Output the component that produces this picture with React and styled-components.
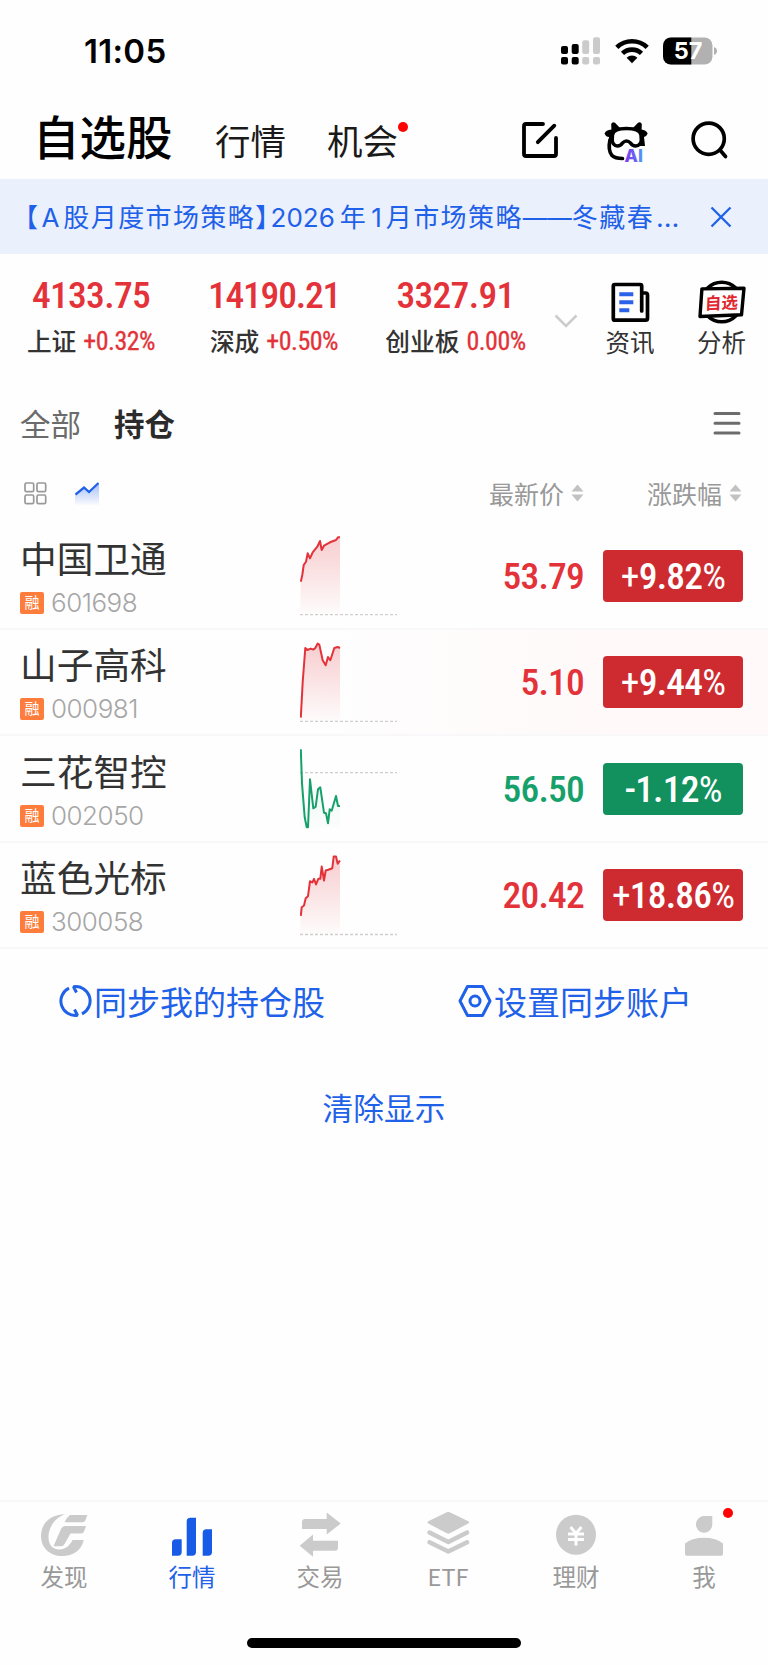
import React from 'react';
import styled, { createGlobalStyle, ThemeProvider } from 'styled-components';

const theme = {
  colors: {
    page: '#fefefe',
    text: '#333333',
    muted: '#999999',
    light: '#a6a6a6',
    blue: '#1f61e8',
    up: '#e33239',
    down: '#16a06b',
    upFill: '#ce2b30',
    downFill: '#12915f',
    line: '#f8f8fa',
    icon: '#cbcbcb',
  },
  fonts: {
    cjk: "'Noto Sans CJK SC', sans-serif",
    latin: "Inter, 'Noto Sans CJK SC', sans-serif",
    number: "'Roboto Condensed', Roboto, 'Noto Sans CJK SC', sans-serif",
  },
};

const GlobalStyle = createGlobalStyle`
  * {
    box-sizing: border-box;
  }

  body {
    margin: 0;
    background: #fefefe;
  }
`;

const Page = styled.div`
  display: flex;
  flex-direction: column;
  width: 768px;
  height: 1665px;
  overflow: hidden;
  background: ${props => props.theme.colors.page};
  color: ${props => props.theme.colors.text};
  font-family: ${props => props.theme.fonts.cjk};
  white-space: nowrap;

  svg {
    display: block;
    flex: none;
  }
`;

const StatusBar = styled.div`
  display: flex;
  align-items: center;
  justify-content: space-between;
  height: 102px;
  padding: 0 51px 0 84px;
  color: #000;
`;

const Clock = styled.div`
  font-family: ${props => props.theme.fonts.latin};
  font-size: 33px;
  font-weight: 600;
  letter-spacing: 0.3px;
`;

const StatusIcons = styled.div`
  display: flex;
  align-items: center;
  gap: 14px;
`;

const NavBar = styled.div`
  display: flex;
  align-items: center;
  height: 77px;
  padding: 0 38px 0 33px;
  color: #000;
`;

const NavTitle = styled.div`
  width: 182px;
  margin-top: -12px;
  font-size: 46.5px;
  font-weight: 500;
  line-height: 60px;
`;

const NavLink = styled.div`
  position: relative;
  width: 112px;
  margin-top: -2px;
  font-size: 35.5px;
  line-height: 60px;
  color: #1a1a1a;
`;

const RedDot = styled.i`
  position: absolute;
  top: ${props => props.$top}px;
  left: ${props => props.$left}px;
  width: 10px;
  height: 10px;
  border-radius: 50%;
  background: #fd0303;
`;

const NavActions = styled.div`
  display: flex;
  align-items: flex-start;
  gap: 40px;
  margin: 6px 0 0 auto;
`;

const Banner = styled.div`
  display: flex;
  align-items: center;
  justify-content: space-between;
  height: 75px;
  padding: 0 36px 0 12px;
  background: #eaf0fc;
  color: ${props => props.theme.colors.blue};
`;

const BannerText = styled.div`
  font-size: 26px;
  letter-spacing: 1.4px;
  line-height: 40px;
`;

const Latin = styled.span`
  margin: 0 ${props => props.$after || 0}px 0 ${props => props.$before || 0}px;
  font-family: ${props => props.theme.fonts.latin};
  letter-spacing: 0;
`;

const Dash = styled(Latin)`
  font-size: 24.5px;
`;

const Ellipsis = styled(Latin)`
  font-size: 27px;
`;

// Half-width form of the closing bracket
const Bracket = styled.span`
  font-feature-settings: 'halt';
`;

const IndexBar = styled.div`
  display: flex;
  height: 116px;
  padding-top: 22px;
`;

const IndexItem = styled.div`
  flex: none;
  width: ${props => props.$width}px;
  text-align: center;
`;

const IndexValue = styled.div`
  font-family: ${props => props.theme.fonts.number};
  font-stretch: 75%;
  font-size: 37.5px;
  font-weight: 500;
  line-height: 39px;
  letter-spacing: ${props => props.$tracking}px;
  color: ${props => props.theme.colors.up};
`;

const IndexLabel = styled.div`
  display: flex;
  align-items: center;
  justify-content: center;
  gap: 7px;
  margin-top: 7px;
  font-size: 24.7px;
  font-weight: 500;
  line-height: 35px;

  em {
    margin-top: 2px;
    font-family: ${props => props.theme.fonts.number};
    font-stretch: 75%;
    font-size: 26px;
    font-style: normal;
    font-weight: 400;
    letter-spacing: -0.5px;
    color: ${props => props.theme.colors.up};
    -webkit-text-stroke: 0.3px;
  }
`;

const Expand = styled.div`
  flex: none;
  width: 43px;
  padding: 37px 0 0 9px;
`;

const Shortcut = styled.div`
  display: flex;
  flex: none;
  flex-direction: column;
  align-items: center;
  width: ${props => props.$width}px;
  padding-top: 4px;
  font-size: 24.5px;
  line-height: 36px;
`;

const GroupTabs = styled.div`
  display: flex;
  align-items: center;
  height: 104px;
  padding: 2px 27px 0 20px;
  font-size: 30.5px;

  svg {
    margin-left: auto;
  }
`;

const GroupTab = styled.div`
  width: 94px;
  font-weight: ${props => (props.$active ? 700 : 400)};
  color: ${props => (props.$active ? '#2b2b2b' : '#6b6b6b')};
`;

const ListHeader = styled.div`
  display: flex;
  align-items: center;
  height: 49px;
  padding: 0 26px 11px 24px;
  color: ${props => props.theme.colors.muted};
  font-size: 25px;
`;

const ViewModes = styled.div`
  display: flex;
  gap: 28px;
`;

const SortLabel = styled.div`
  display: flex;
  align-items: center;
  gap: 7px;
  margin: -1px 0 0 ${props => props.$gap};
  line-height: 30px;
`;

const Row = styled.div`
  display: grid;
  grid-template-columns: 280px 97px 1fr 140px;
  align-items: center;
  height: 106.5px;
  padding: 1px 25px 0 20px;
  background: ${props =>
    props.$flash ? 'linear-gradient(90deg, #fefefe 40%, #fff9f9 80%)' : 'none'};
  border-bottom: 2px solid ${props => props.theme.colors.line};

  svg {
    margin-top: -2px;
  }
`;

const Stock = styled.div`
  padding-top: 3px;
`;

const StockName = styled.div`
  font-size: 36.7px;
  line-height: 44px;
`;

const StockCode = styled.div`
  display: flex;
  align-items: center;
  gap: 7px;
  margin-top: 7px;
  font-family: ${props => props.theme.fonts.latin};
  font-size: 26px;
  font-weight: 300;
  line-height: 34px;
  letter-spacing: -0.5px;
  color: ${props => props.theme.colors.light};
`;

const MarginTag = styled.span`
  width: 24px;
  height: 22px;
  border-radius: 2px;
  background: #ff7d3c;
  color: #fff;
  font-family: ${props => props.theme.fonts.cjk};
  font-size: 15px;
  font-weight: 400;
  line-height: 20px;
  letter-spacing: 0;
  text-align: center;
`;

const Price = styled.div`
  padding-right: 19px;
  font-family: ${props => props.theme.fonts.number};
  font-stretch: 75%;
  font-size: 37.5px;
  font-weight: 500;
  letter-spacing: -0.8px;
  text-align: right;
  color: ${props => (props.$up ? props.theme.colors.up : props.theme.colors.down)};
`;

const Change = styled.div`
  height: 52px;
  border-radius: 4px;
  background: ${props => (props.$up ? props.theme.colors.upFill : props.theme.colors.downFill)};
  color: #fff;
  font-family: ${props => props.theme.fonts.number};
  font-stretch: 75%;
  font-size: 37.5px;
  font-weight: 500;
  line-height: 53px;
  letter-spacing: -0.8px;
  text-align: center;

  small {
    font-size: 37.5px;
    font-weight: 400;
  }
`;

const Actions = styled.div`
  display: flex;
  justify-content: space-between;
  padding: 29px 76px 0 59px;
`;

const Action = styled.div`
  display: flex;
  align-items: center;
  gap: 2px;
  font-size: 33px;
  line-height: 46px;
  color: ${props => props.theme.colors.blue};
`;

const ClearAction = styled.div`
  margin-top: 60px;
  font-size: 30.7px;
  line-height: 46px;
  text-align: center;
  color: ${props => props.theme.colors.blue};
`;

const TabBar = styled.div`
  display: grid;
  grid-template-columns: repeat(6, 1fr);
  height: 138px;
  margin-top: auto;
  padding-top: 8px;
  border-top: 2px solid ${props => props.theme.colors.line};
`;

const Tab = styled.div`
  position: relative;
  display: flex;
  flex-direction: column;
  align-items: center;
  font-size: 23.5px;
  line-height: 36px;
  color: ${props => (props.$active ? props.theme.colors.blue : props.theme.colors.muted)};

  svg {
    fill: ${props => (props.$active ? '#175be6' : props.theme.colors.icon)};
  }
`;

const HomeIndicator = styled.div`
  width: 274px;
  height: 10px;
  margin: 0 auto 17px;
  border-radius: 5px;
  background: #000;
`;

const SignalIcon = () => (
  <svg width="40" height="28" viewBox="0 0 40 28">
    <g fill="#000">
      <rect x="0" y="9" width="7" height="8" rx="2" />
      <rect x="0" y="20" width="7" height="7.5" rx="2" />
      <rect x="10.7" y="7" width="7" height="10" rx="2" />
      <rect x="10.7" y="20" width="7" height="7.5" rx="2" />
    </g>
    <g fill="#cbcbcb">
      <rect x="21.2" y="3.3" width="7" height="13.7" rx="2" />
      <rect x="21.2" y="20" width="7" height="7.5" rx="2" />
      <rect x="32" y="0.3" width="7" height="16.7" rx="2" />
      <rect x="32" y="20" width="7" height="7.5" rx="2" />
    </g>
  </svg>
);

const WifiIcon = () => (
  <svg width="34" height="26" viewBox="0 0 34 26">
    <g fill="none" stroke="#000" strokeWidth="4.6">
      <path d="M1.8 9.4a22 22 0 0 1 30.4 0" />
      <path d="M7.5 15.4a13.8 13.8 0 0 1 19 0" />
    </g>
    <path d="M17 25.3l-5.4-5.6a8 8 0 0 1 10.8 0z" />
  </svg>
);

const BatteryIcon = () => (
  <svg width="54" height="28" viewBox="0 0 54 28">
    <defs>
      <clipPath id="level">
        <rect width="28.3" height="28" />
      </clipPath>
    </defs>
    <rect y="0.4" width="49.5" height="27.2" rx="8" fill="#b1b1b1" />
    <rect y="0.4" width="49.5" height="27.2" rx="8" fill="#000" clipPath="url(#level)" />
    <path d="M51 10q3 1.2 3 4t-3 4z" fill="#b1b1b1" />
    <text x="25" y="22.4" fill="#fff" fontFamily="Inter, sans-serif" fontSize="23.5" fontWeight="700" textAnchor="middle">57</text>
  </svg>
);

const EditIcon = () => (
  <svg width="44" height="42" viewBox="0 0 44 42" fill="none" stroke="#000" strokeWidth="3.8" strokeLinecap="round" strokeLinejoin="round">
    <path d="M23 4H6a2 2 0 0 0-2 2v28a2 2 0 0 0 2 2h28a2 2 0 0 0 2-2V18" />
    <path d="M17.8 22.2L34.3 5.7" />
  </svg>
);

const MascotIcon = () => (
  <svg width="46" height="48" viewBox="0 0 46 48">
    <defs>
      <linearGradient id="ai" x1="0" x2="1">
        <stop offset="0" stopColor="#7a3ce8" />
        <stop offset="0.6" stopColor="#6a62f2" />
        <stop offset="1" stopColor="#4aa4f8" />
      </linearGradient>
    </defs>
    <path d="M7.5 12L7.2 4Q8.5 1 11 2.8L16 8zM37.5 12L37.8 4Q36.5 1 34 2.8L29 8z" />
    <path d="M9 9.5Q2 9.5 0.5 13.5Q2 17 5 17L5 22H10zM36 9.5Q42 9.5 43.7 13.5Q42.5 16.5 40 17L41 26H36z" />
    <path
      d="M8.5 15Q9 8.5 22.5 8.5T37 15L37.3 20Q37 25.5 31.5 26Q28.5 26 26.5 23Q22.5 19 18.5 23Q16.5 26 13.5 26Q8.5 25.5 8.2 20z"
      fill="#fefefe"
      stroke="#000"
      strokeWidth="3.5"
      strokeLinejoin="round"
    />
    <path d="M6 20C4.5 27 5 32 8 35.5Q11 38.5 18.5 38.5" fill="none" stroke="#000" strokeWidth="3.7" strokeLinecap="round" />
    <text x="20.5" y="41.5" fill="url(#ai)" fontFamily="Inter, sans-serif" fontSize="17.5" fontWeight="800">AI</text>
  </svg>
);

const SearchIcon = () => (
  <svg width="40" height="42" viewBox="0 0 40 42" fill="none" stroke="#000" strokeWidth="3.7" strokeLinecap="round">
    <circle cx="18.7" cy="18.7" r="15.6" />
    <path d="M30 30L35.5 36.5" />
  </svg>
);

const CloseIcon = () => (
  <svg width="22" height="22" viewBox="0 0 22 22" fill="none" stroke="#1f61e8" strokeWidth="2.3">
    <path d="M1.5 1.5l19 19M20.5 1.5l-19 19" />
  </svg>
);

const NewsIcon = () => (
  <svg width="44" height="44" viewBox="0 0 44 44" fill="none" strokeLinejoin="round" strokeLinecap="round">
    <path
      d="M33.7 31V6a1.5 1.5 0 0 0-1.5-1.5H6.8A1.5 1.5 0 0 0 5.3 6v32.7a1.5 1.5 0 0 0 1.5 1.5H37.5a2 2 0 0 0 2-2V15q0-2-2-2H34"
      stroke="#000"
      strokeWidth="3.7"
    />
    <path d="M11.3 14.3h14M11.3 22.3h14M11.3 30.3h10" stroke="#2a62e8" strokeWidth="4" strokeLinecap="butt" />
  </svg>
);

const AnalysisIcon = () => (
  <svg width="48" height="44" viewBox="0 0 48 44">
    <circle cx="23.7" cy="22" r="19.8" fill="none" stroke="#000" strokeWidth="3.6" />
    <path d="M3.9 8.9L46 8.2L43.5 34.8L2 36.5z" fill="#fefefe" stroke="#000" strokeWidth="3.4" strokeLinejoin="round" />
    <text x="25" y="28.8" fill="#e0262e" fontFamily="Noto Sans CJK SC, sans-serif" fontSize="16.5" fontWeight="700" textAnchor="middle" transform="rotate(-2 24 22) skewX(-4)">自选</text>
  </svg>
);

const ChevronIcon = () => (
  <svg width="24" height="16" viewBox="0 0 24 16" fill="none" stroke="#cccccc" strokeWidth="2.5">
    <path d="M1.5 2.5L12 13L22.5 2.5" />
  </svg>
);

const MenuIcon = () => (
  <svg width="28" height="26" viewBox="0 0 28 26" stroke="#6c6c6c" strokeWidth="3" strokeLinecap="round">
    <path d="M2 3.5H26M2 13.3H26M2 23H26" />
  </svg>
);

const GridIcon = () => (
  <svg width="23" height="23" viewBox="0 0 23 23" fill="none" stroke="#999999" strokeWidth="1.7">
    <rect x="1" y="1" width="8.7" height="8.7" rx="1.5" />
    <rect x="13" y="1" width="8.7" height="8.7" rx="1.5" />
    <rect x="1" y="13" width="8.7" height="8.7" rx="1.5" />
    <rect x="13" y="13" width="8.7" height="8.7" rx="1.5" />
  </svg>
);

const TrendIcon = () => (
  <svg width="24" height="23" viewBox="0 0 24 23">
    <defs>
      <linearGradient id="trend" x1="0" y1="0" x2="0" y2="1">
        <stop offset="0" stopColor="#1f61e8" stopOpacity="0.4" />
        <stop offset="1" stopColor="#1f61e8" stopOpacity="0.02" />
      </linearGradient>
    </defs>
    <path d="M0 13L9 6L14 10L24 1V23H0z" fill="url(#trend)" />
    <path d="M0.5 12.5L9 5.5L14 10L23.5 1" fill="none" stroke="#1f61e8" strokeWidth="2.3" />
  </svg>
);

const SortIcon = () => (
  <svg width="13" height="18" viewBox="0 0 13 18" fill="#c2c2c2">
    <path d="M6.5 0.5L12.5 7.5H0.5zM6.5 17.5L12.5 10.5H0.5z" />
  </svg>
);

const SyncIcon = () => (
  <svg width="33" height="34" viewBox="0 0 33 34" fill="none" stroke="#1f61e8" strokeWidth="3">
    <path d="M10 4.2A14.3 14.3 0 0 0 18.5 31.2L15.5 25.5" strokeLinejoin="bevel" />
    <path d="M23 29.8A14.3 14.3 0 0 0 14.5 2.8L17.5 8.5" strokeLinejoin="bevel" />
  </svg>
);

const SettingIcon = () => (
  <svg width="34" height="34" viewBox="0 0 34 34" fill="none" stroke="#1f61e8" strokeWidth="3">
    <path d="M9.5 2.5h15l7.5 14.5l-7.5 14.5h-15l-7.5-14.5z" strokeLinejoin="round" />
    <circle cx="17" cy="17" r="5" />
  </svg>
);

const indices = [
  { name: '上证', value: '4133.75', change: '+0.32%', width: 182, tracking: -0.7 },
  { name: '深成', value: '14190.21', change: '+0.50%', width: 184, tracking: -1.2 },
  { name: '创业板', value: '3327.91', change: '0.00%', width: 179, tracking: -0.7 },
];

// Chart points are in row coordinates, base is the previous close
const stocks = [
  {
    name: '中国卫通', code: '601698', price: '53.79', sign: '+', change: '9.82', up: true, base: 92.7,
    points: '0.8,59.7 2.3,53 3.7,43 6,39.7 7.7,31.3 10,36.3 12.7,30.3 17.3,24.7 20,19 21.7,28 24,23.7 30,20.3 36,18 38,15.3 40,15.3',
  },
  {
    name: '山子高科', code: '000981', price: '5.10', sign: '+', change: '9.44', up: true, base: 92.3, flash: true,
    points: '0.8,88.6 2.7,53 5.3,19 7.3,21 10.7,19.6 13.3,20.6 15.3,19 17.7,14.6 19.3,15.6 22.7,31.3 25.7,36.3 28,28 30.3,31.3 34.3,19 37.7,18 40,19',
  },
  {
    name: '三花智控', code: '002050', price: '56.50', sign: '-', change: '1.12', up: false, base: 37.7,
    points: '0.8,14.3 2,48.3 4.7,82.3 6.7,92.3 8,92.3 10,44.3 13.3,73.3 15.7,71.7 18,54.3 20.3,52.3 24,77.7 26,78.3 28,88.3 29.7,74.3 31.7,75.7 36,61 38,71 40,71',
  },
  {
    name: '蓝色光标', code: '300058', price: '20.42', sign: '+', change: '18.86', up: true, base: 92.5,
    points: '0.8,73.8 1.7,65.2 4,63.5 5.7,56.2 8,54.2 10,39.2 12.3,40.5 14,36.8 16,42.5 18.3,36.8 20.3,36.8 21.7,24.5 24,38.5 25.7,28.5 28.3,27.8 32.3,26.2 33.7,14.5 36,14.5 37.7,21.8 40,18.5',
  },
];

const Sparkline = ({ id, points, base, up }) => {
  const color = up ? '#e33239' : '#16a06b';

  return (
    <svg width="97" height="105" viewBox="0 0 97 105">
      <defs>
        <linearGradient id={id} gradientUnits="userSpaceOnUse" x1="0" y1="15" x2="0" y2="93">
          <stop offset="0" stopColor={color} stopOpacity={up ? 0.24 : 0.12} />
          <stop offset="1" stopColor={color} stopOpacity="0.01" />
        </linearGradient>
      </defs>
      <path d={`M0 ${base}H97`} stroke="#cfcfcf" strokeWidth="1.3" strokeDasharray="3 2" />
      <polygon points={`0,93 ${points} 40,93`} fill={`url(#${id})`} />
      <polyline points={points} fill="none" stroke={color} strokeWidth="2" strokeLinejoin="round" />
    </svg>
  );
};

const tabs = [
  {
    label: '发现',
    icon: (
      <>
        <path d="M25 4.3C10 4.5 1 13.5 1 26C1 38 10 46 22 46C33 46 41.5 40.5 43.7 30H32.5C29.5 36 25 39.5 19.5 39.5C12 39.5 8.5 34 8.5 27C8.5 17 15 8 25 4.3z" />
        <path d="M30 5H47.3L45.5 10Q44.8 12.3 42.5 12.3H24.5Q27 7 30 5z" />
        <path d="M25 16H46L44 21.5Q43.3 23.5 41 23.5H30.5L24.5 34Q23.3 36.3 21 36.3H13.5L21 19Q22.5 16 25 16z" />
      </>
    ),
  },
  {
    label: '行情',
    active: true,
    icon: (
      <>
        <path d="M4 45.7V33q0-3.7 3.7-3.7h6V42q0 3.7-3.7 3.7z" />
        <path d="M18.7 45.7V11.4q0-3.7 3.7-3.7H28V42q0 3.7-3.7 3.7z" />
        <path d="M34.7 45.7V23q0-3.7 3.7-3.7H44V42q0 3.7-3.7 3.7z" />
      </>
    ),
  },
  {
    label: '交易',
    icon: (
      <>
        <path d="M6 19V12q0-3 3-3H30.7V2.5L44.7 13.5L30.7 24.5V19z" />
        <path d="M42 30.7V37.7q0 3-3 3H17V46.7L3.7 35.7L17 24.5V30.7z" />
      </>
    ),
  },
  {
    label: 'ETF',
    icon: (
      <>
        <path d="M22.8 2.3Q24.3 1.5 25.8 2.3L44.3 11.3Q46 12.5 44.3 13.5L25.8 23.3Q24.3 24.2 22.8 23.3L4.3 13.5Q2.6 12.5 4.3 11.3z" />
        <path
          d="M5.5 22.5L24.3 32L43.1 22.5M5.5 32.3L24.3 41.5L43.1 32.3"
          fill="none"
          stroke="#cbcbcb"
          strokeWidth="4.5"
          strokeLinecap="round"
          strokeLinejoin="round"
        />
      </>
    ),
  },
  {
    label: '理财',
    icon: (
      <>
        <circle cx="24" cy="24.7" r="20" />
        <path d="M18.5 17L24 23.5L29.5 17M24 23V35.5M16 24H32M16 29.5H32" fill="none" stroke="#fefefe" strokeWidth="3" />
      </>
    ),
  },
  {
    label: '我',
    dot: true,
    icon: (
      <>
        <path d="M32.3 6V15A8.2 8.4 0 1 1 24.5 6z" />
        <path d="M5 44V33.5Q12 27.7 24 27.7T43 33.5V44q0 1.7-1.7 1.7H6.7Q5 45.7 5 44z" />
      </>
    ),
  },
];

const App = () => (
  <ThemeProvider theme={theme}>
    <GlobalStyle />
    <Page>
      <StatusBar>
        <Clock>11:05</Clock>
        <StatusIcons>
          <SignalIcon />
          <WifiIcon />
          <BatteryIcon />
        </StatusIcons>
      </StatusBar>

      <NavBar>
        <NavTitle>自选股</NavTitle>
        <NavLink>行情</NavLink>
        <NavLink>
          机会
          <RedDot $top={12} $left={71} />
        </NavLink>
        <NavActions>
          <EditIcon />
          <MascotIcon />
          <SearchIcon />
        </NavActions>
      </NavBar>

      <Banner>
        <BannerText>
          【<Latin $before={2} $after={4}>A</Latin>股月度市场策略<Bracket>】</Bracket>
          <Latin $before={1} $after={5}>2026</Latin>年
          <Latin $before={4} $after={4}>1</Latin>月市场策略<Dash>——</Dash>冬藏春<Ellipsis $before={2}>…</Ellipsis>
        </BannerText>
        <CloseIcon />
      </Banner>

      <IndexBar>
        {indices.map(item => (
          <IndexItem key={item.name} $width={item.width}>
            <IndexValue $tracking={item.tracking}>{item.value}</IndexValue>
            <IndexLabel>
              {item.name}
              <em>{item.change}</em>
            </IndexLabel>
          </IndexItem>
        ))}
        <Expand>
          <ChevronIcon />
        </Expand>
        <Shortcut $width={84}>
          <NewsIcon />
          资讯
        </Shortcut>
        <Shortcut $width={99}>
          <AnalysisIcon />
          分析
        </Shortcut>
      </IndexBar>

      <GroupTabs>
        <GroupTab>全部</GroupTab>
        <GroupTab $active>持仓</GroupTab>
        <MenuIcon />
      </GroupTabs>

      <ListHeader>
        <ViewModes>
          <GridIcon />
          <TrendIcon />
        </ViewModes>
        <SortLabel $gap="auto">
          最新价
          <SortIcon />
        </SortLabel>
        <SortLabel $gap="63px">
          涨跌幅
          <SortIcon />
        </SortLabel>
      </ListHeader>

      {stocks.map(stock => (
        <Row key={stock.code} $flash={stock.flash}>
          <Stock>
            <StockName>{stock.name}</StockName>
            <StockCode>
              <MarginTag>融</MarginTag>
              {stock.code}
            </StockCode>
          </Stock>
          <Sparkline id={`fill-${stock.code}`} points={stock.points} base={stock.base} up={stock.up} />
          <Price $up={stock.up}>{stock.price}</Price>
          <Change $up={stock.up}>
            {stock.up ? <small>{stock.sign}</small> : stock.sign}
            {stock.change}
            <small>%</small>
          </Change>
        </Row>
      ))}

      <Actions>
        <Action>
          <SyncIcon />
          同步我的持仓股
        </Action>
        <Action>
          <SettingIcon />
          设置同步账户
        </Action>
      </Actions>
      <ClearAction>清除显示</ClearAction>

      <TabBar>
        {tabs.map(tab => (
          <Tab key={tab.label} $active={tab.active}>
            <svg width="48" height="48" viewBox="0 0 48 48">{tab.icon}</svg>
            {tab.label}
            {tab.dot && <RedDot $top={-2} $left={83} />}
          </Tab>
        ))}
      </TabBar>
      <HomeIndicator />
    </Page>
  </ThemeProvider>
);

export default App;
